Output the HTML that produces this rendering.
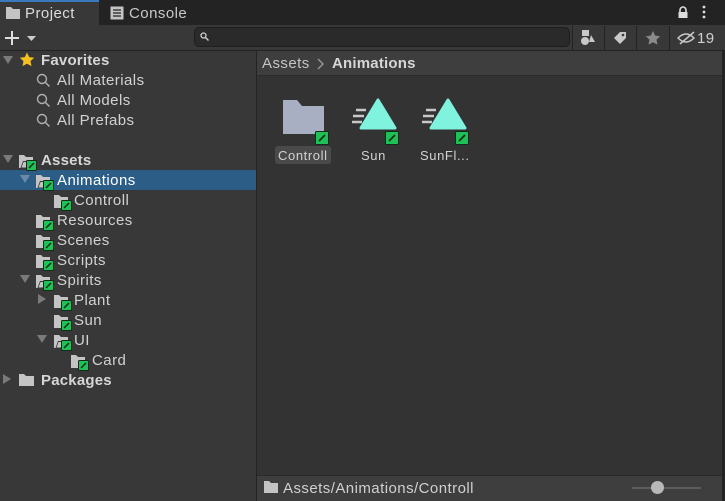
<!DOCTYPE html>
<html><head><meta charset="utf-8"><style>
*{margin:0;padding:0;box-sizing:border-box}
body{width:725px;height:501px;background:#383838;font-family:"Liberation Sans",sans-serif;color:#d2d2d2;overflow:hidden;position:relative;font-size:15px}
.a{position:absolute}
.t{position:absolute;white-space:nowrap;line-height:22px;font-size:15px;letter-spacing:0.45px}
.b{font-weight:bold;letter-spacing:0.2px}
</style></head><body>
<div class="a" style="left:0;top:0;width:725px;height:25px;background:#232323"></div>
<div class="a" style="left:0;top:0;width:99px;height:25px;background:#383838;border-top:2px solid #3a79bb"></div>
<svg class="a" style="left:6px;top:7px" width="14" height="12"><path d="M0 0h5l2 2h7v10H0z" fill="#c4c4c4"/></svg>
<div class="t" style="left:25px;top:3px;color:#dcdcdc">Project</div>
<svg class="a" style="left:110px;top:6px" width="14" height="14"><rect x="0.5" y="0.5" width="13" height="13" fill="#c4c4c4"/><path d="M3 4h8M3 7h8M3 10h8" stroke="#232323" stroke-width="1.3"/></svg>
<div class="t" style="left:129px;top:3px;color:#c8c8c8">Console</div>
<svg class="a" style="left:677px;top:6px" width="12" height="12"><path d="M3 6V4a3 3 0 0 1 6 0v2" stroke="#ddd" stroke-width="1.6" fill="none"/><rect x="1.5" y="6" width="9" height="6" fill="#ddd"/></svg>
<svg class="a" style="left:702px;top:5px" width="4" height="14"><circle cx="2" cy="2" r="1.4" fill="#ddd"/><circle cx="2" cy="7" r="1.4" fill="#ddd"/><circle cx="2" cy="12" r="1.4" fill="#ddd"/></svg>
<div class="a" style="left:0;top:25px;width:725px;height:26px;background:#383838;border-bottom:1px solid #232323"></div>
<svg class="a" style="left:5px;top:30px" width="32" height="16"><path d="M7 1v14M0 8h14" stroke="#ddd" stroke-width="2"/><path d="M22 6h9l-4.5 5z" fill="#ccc"/></svg>
<div class="a" style="left:194px;top:27px;width:376px;height:20px;background:#2a2a2a;border:1px solid #1e1e1e;border-radius:5px"></div>
<svg class="a" style="left:200px;top:32px" width="10" height="10"><circle cx="3.5" cy="3.5" r="2.5" stroke="#ccc" stroke-width="1.3" fill="none"/><path d="M5.5 5.5l3 3" stroke="#ccc" stroke-width="1.5"/></svg>
<div class="a" style="left:572px;top:26px;width:1px;height:24px;background:#232323"></div>
<div class="a" style="left:604px;top:26px;width:1px;height:24px;background:#232323"></div>
<div class="a" style="left:636px;top:26px;width:1px;height:24px;background:#232323"></div>
<div class="a" style="left:669px;top:26px;width:1px;height:24px;background:#232323"></div>
<svg class="a" style="left:580px;top:30px" width="16" height="16"><rect x="2" y="0" width="7" height="6" fill="#c8c8c8"/><circle cx="5" cy="11" r="4" fill="#c8c8c8"/><path d="M11 5l4 7h-6z" fill="#c8c8c8"/></svg>
<svg class="a" style="left:613px;top:31px" width="14" height="14"><path d="M7 1h6v6l-6 6-6-6z" fill="#c8c8c8"/><circle cx="10" cy="4" r="1.3" fill="#383838"/></svg>
<svg class="a" style="left:645px;top:30px" width="16" height="16"><path d="M8 1l2.2 4.6 5 .6-3.7 3.4 1 5L8 12.2 3.5 14.6l1-5L.8 6.2l5-.6z" fill="#8a8a8a"/></svg>
<svg class="a" style="left:677px;top:30px" width="20" height="16"><path d="M1 8q8-8 16 0q-8 8-16 0z" stroke="#c8c8c8" stroke-width="1.5" fill="none"/><path d="M3 14L17 2" stroke="#c8c8c8" stroke-width="1.5"/></svg>
<div class="t" style="left:697px;top:28px;color:#d0d0d0">19</div>
<svg class="a" style="left:3px;top:55px" width="10" height="10"><path d="M0 1h10L5 9z" fill="#7a7a7a"/></svg>
<svg class="a" style="left:19px;top:52px" width="16" height="16"><path d="M8 .5l2.2 4.6 5 .6-3.7 3.4 1 5L8 11.7 3.5 14.1l1-5L.8 5.7l5-.6z" fill="#f4c020"/></svg>
<div class="t b" style="left:41px;top:50px;color:#d6d6d6">Favorites</div>
<div class="t" style="left:57px;top:70px">All Materials</div>
<div class="t" style="left:57px;top:90px">All Models</div>
<div class="t" style="left:57px;top:110px">All Prefabs</div>
<svg class="a" style="left:36px;top:73px" width="16" height="60"><g stroke="#b0b0b0" stroke-width="1.4" fill="none"><circle cx="6" cy="6" r="4.5"/><path d="M9 9l4.5 4.5"/><circle cx="6" cy="26" r="4.5"/><path d="M9 29l4.5 4.5"/><circle cx="6" cy="46" r="4.5"/><path d="M9 49l4.5 4.5"/></g></svg>
<div class="a" style="left:0;top:170px;width:256px;height:20px;background:#2c5d87"></div>
<svg class="a" style="left:0;top:150px" width="256" height="240">
<defs>
<g id="f"><path d="M0 0h5l2 2h7v11H0z" fill="#c4c4c4"/></g>
<g id="o"><path d="M0 0h5l2 2h7v11H0z" fill="#c4c4c4"/><path d="M1.5 13l2.5-7h10.5l-2.5 7z" fill="#383838"/><path d="M2.5 12.5l2-5.5h9l-2 5.5z" fill="#c4c4c4"/></g>
<g id="g"><rect x="0.5" y="0.5" width="10" height="10" rx="1" fill="#1fc055" stroke="#142a1a"/><path d="M3 8l5-5" stroke="#142a1a" stroke-width="1.5"/></g>
</defs>
<path d="M3 5h10L8 13z" fill="#7a7a7a"/>
<use href="#o" x="19" y="5"/><use href="#g" x="26" y="10"/>
<path d="M20 25h10l-5 8z" fill="#6a8aa8"/>
<use href="#o" x="36" y="25"/><use href="#g" x="43" y="30"/>
<use href="#f" x="54" y="45"/><use href="#g" x="61" y="50"/>
<use href="#f" x="36" y="65"/><use href="#g" x="43" y="70"/>
<use href="#f" x="36" y="85"/><use href="#g" x="43" y="90"/>
<use href="#f" x="36" y="105"/><use href="#g" x="43" y="110"/>
<path d="M20 125h10l-5 8z" fill="#7a7a7a"/>
<use href="#o" x="36" y="125"/><use href="#g" x="43" y="130"/>
<path d="M38 144v10l8-5z" fill="#7a7a7a"/>
<use href="#f" x="54" y="145"/><use href="#g" x="61" y="150"/>
<use href="#f" x="54" y="165"/><use href="#g" x="61" y="170"/>
<path d="M37 185h10l-5 8z" fill="#7a7a7a"/>
<use href="#o" x="54" y="185"/><use href="#g" x="61" y="190"/>
<use href="#f" x="71" y="205"/><use href="#g" x="78" y="210"/>
<path d="M3 224v10l8-5z" fill="#7a7a7a"/>
<path d="M19 224h5l2 2h8v10H19z" fill="#c4c4c4"/>
</svg>
<div class="t b" style="left:41px;top:150px;color:#d6d6d6">Assets</div>
<div class="t" style="left:57px;top:170px;color:#fff">Animations</div>
<div class="t" style="left:74px;top:190px">Controll</div>
<div class="t" style="left:57px;top:210px">Resources</div>
<div class="t" style="left:57px;top:230px">Scenes</div>
<div class="t" style="left:57px;top:250px">Scripts</div>
<div class="t" style="left:57px;top:270px">Spirits</div>
<div class="t" style="left:74px;top:290px">Plant</div>
<div class="t" style="left:74px;top:310px">Sun</div>
<div class="t" style="left:74px;top:330px">UI</div>
<div class="t" style="left:92px;top:350px">Card</div>
<div class="t b" style="left:41px;top:370px;color:#d6d6d6">Packages</div>
<div class="a" style="left:256px;top:51px;width:1px;height:450px;background:#232323"></div>
<div class="a" style="left:257px;top:51px;width:465px;height:25px;background:#3e3e3e;border-bottom:1px solid #2a2a2a"></div>
<div class="t" style="left:262px;top:53px;color:#c4c4c4">Assets</div>
<svg class="a" style="left:317px;top:58px" width="8" height="12"><path d="M1 1l5 5-5 5" stroke="#999" stroke-width="1.4" fill="none"/></svg>
<div class="t b" style="left:332px;top:53px;color:#d6d6d6">Animations</div>
<div class="a" style="left:257px;top:76px;width:465px;height:400px;background:#333"></div>
<div class="a" style="left:722px;top:51px;width:3px;height:450px;background:#232323"></div>
<svg class="a" style="left:270px;top:95px" width="210" height="55">
<path d="M13 5h14l5 6h22v28H13z" fill="#a9afc2"/>
<rect x="45.5" y="36.5" width="13" height="13" rx="1" fill="#1fc055" stroke="#142a1a"/><path d="M49 46l6-6" stroke="#142a1a" stroke-width="1.6"/>
<path d="M108 5l17 28h-34z" fill="#7ff3dd" stroke="#7ff3dd" stroke-width="3" stroke-linejoin="round"/>
<path d="M86 15h10M83 21h11M82 27h10" stroke="#c8c8c8" stroke-width="2.5"/>
<rect x="115.5" y="36.5" width="13" height="13" rx="1" fill="#1fc055" stroke="#142a1a"/><path d="M119 46l6-6" stroke="#142a1a" stroke-width="1.6"/>
<path d="M178 5l17 28h-34z" fill="#7ff3dd" stroke="#7ff3dd" stroke-width="3" stroke-linejoin="round"/>
<path d="M156 15h10M153 21h11M152 27h10" stroke="#c8c8c8" stroke-width="2.5"/>
<rect x="185.5" y="36.5" width="13" height="13" rx="1" fill="#1fc055" stroke="#142a1a"/><path d="M189 46l6-6" stroke="#142a1a" stroke-width="1.6"/>
</svg>
<div class="a" style="left:275px;top:146px;width:56px;height:18px;background:#4a4a4a;border-radius:3px"></div>
<div class="t" style="left:278px;top:145px;font-size:13px;letter-spacing:0.6px;color:#d2d2d2">Controll</div>
<div class="t" style="left:361px;top:145px;font-size:13px;letter-spacing:0.6px">Sun</div>
<div class="t" style="left:420px;top:145px;font-size:13px;letter-spacing:0.6px">SunFl...</div>
<div class="a" style="left:257px;top:475px;width:465px;height:26px;background:#3e3e3e;border-top:1px solid #2a2a2a"></div>
<svg class="a" style="left:264px;top:481px" width="14" height="12"><path d="M0 0h5l2 2h7v10H0z" fill="#c4c4c4"/></svg>
<div class="t" style="left:283px;top:478px;color:#d0d0d0">Assets/Animations/Controll</div>
<div class="a" style="left:632px;top:487px;width:69px;height:2px;background:#5c5c5c"></div>
<div class="a" style="left:651px;top:481px;width:13px;height:13px;border-radius:50%;background:#b8b8b8"></div>
</body></html>
